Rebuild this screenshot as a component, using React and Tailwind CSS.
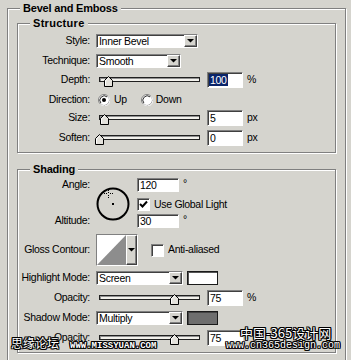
import React from "react";

const sunken =
  "border border-t-[#808080] border-l-[#808080] border-b-white border-r-white shadow-[inset_1px_1px_0_#404040]";
const raised =
  "border border-t-white border-l-white border-b-[#404040] border-r-[#404040] shadow-[inset_-1px_-1px_0_#808080]";
const outline =
  "[text-shadow:1px_0_0_#000,-1px_0_0_#000,0_1px_0_#000,0_-1px_0_#000,1px_1px_0_#000,-1px_-1px_0_#000,1px_-1px_0_#000,-1px_1px_0_#000]";

function Group({ title, className, children }) {
  return (
    <div
      className={
        "relative border border-[#808080] shadow-[inset_1px_1px_0_#fff,1px_1px_0_#fff] " +
        className
      }
    >
      <div className="absolute left-[12px] -top-[7px] px-[3px] bg-[#d5d4ce] font-bold text-[11px] leading-[12px] tracking-[-0.2px]">
        {title}
      </div>
      {children}
    </div>
  );
}

function Arrow() {
  return (
    <svg width="7" height="4" viewBox="0 0 7 4">
      <polygon points="0,0 7,0 3.5,3.6" fill="#000" />
    </svg>
  );
}

function Select({ w, text }) {
  return (
    <div className={`${w} h-[14px] ${sunken} bg-white flex items-stretch shrink-0`}>
      <div className="flex-1 pl-[2px] leading-[12px] whitespace-nowrap overflow-hidden">{text}</div>
      <div className={`w-[13px] ${raised} bg-[#d5d4ce] flex items-center justify-center`}>
        <Arrow />
      </div>
    </div>
  );
}

function Input({ w, h, children }) {
  return (
    <div className={`${w} ${h} ${sunken} bg-white flex items-center pl-[1px] shrink-0 leading-[12px]`}>
      {children}
    </div>
  );
}

function Slider({ thumb }) {
  return (
    <div className="relative w-[111px] h-[16px] shrink-0">
      <div className="ml-[3px] mt-[5px] w-[101px] h-[5px] border border-[#202020] bg-[#f2f1ec] shadow-[inset_1px_1px_0_#909090]" />
      <svg className={`absolute top-[4px] ${thumb}`} width="9" height="11" viewBox="0 0 9 11">
        <polygon points="0.5,10.5 0.5,4.5 4.5,0.5 8.5,4.5 8.5,10.5" fill="#e4e2dc" stroke="#000" />
        <polyline points="1.5,9.5 1.5,4.9 4.5,1.9" fill="none" stroke="#fff" />
      </svg>
    </div>
  );
}

function Label({ children }) {
  return <div className="w-[72px] shrink-0 text-right whitespace-nowrap">{children}</div>;
}

function Radio({ checked }) {
  return (
    <svg width="12" height="12" viewBox="0 0 12 12" className="shrink-0">
      <circle cx="6" cy="6" r="5.5" fill="#fff" stroke="#808080" />
      <path d="M10.3 2.4 A5.5 5.5 0 0 1 2.4 10.3" fill="none" stroke="#fff" />
      <path d="M2.9 9.1 A4.4 4.4 0 0 1 9.1 2.9" fill="none" stroke="#303030" />
      {checked && <circle cx="6" cy="6" r="2" fill="#000" />}
    </svg>
  );
}

function Check({ checked }) {
  return (
    <div className={`w-[13px] h-[13px] ${sunken} bg-white shrink-0 flex items-center justify-center`}>
      {checked && (
        <svg width="9" height="9" viewBox="0 0 9 9">
          <path d="M1 4 L3.5 6.5 L8 1.5" fill="none" stroke="#000" strokeWidth="2" />
        </svg>
      )}
    </div>
  );
}

function SliderRow({ className, label, thumb, value, unit, selected }) {
  return (
    <div className={`flex items-center h-[16px] ${className}`}>
      <Label>{label}</Label>
      <div className="ml-[6px] flex items-center">
        <Slider thumb={thumb} />
        <Input w="w-[36px]" h="h-[16px]">
          {selected ? (
            <span className="bg-[#0a246a] text-white px-[1px]">{value}</span>
          ) : (
            <span className="px-[1px]">{value}</span>
          )}
        </Input>
        {unit && <span className="ml-[4px]">{unit}</span>}
      </div>
    </div>
  );
}

export default function App() {
  return (
    <div className="relative w-[351px] h-[360px] overflow-hidden bg-[#d5d4ce] text-black font-['Liberation_Sans',Arial,sans-serif] text-[10.5px] tracking-[-0.3px]">
      <div className="pt-[8px] pl-[7px]">
        <Group title="Bevel and Emboss" className="w-[339px] h-[420px]">
          <div className="pt-[14px] pl-[9px]">
            <Group title={<span className="tracking-[0.3px]">Structure</span>} className="w-[319px] pt-[10px] pb-[6px]">
              <div className="flex items-center h-[14px]">
                <Label>Style:</Label>
                <div className="ml-[6px]">
                  <Select w="w-[102px]" text="Inner Bevel" />
                </div>
              </div>
              <div className="flex items-center h-[14px] mt-[6px]">
                <Label>Technique:</Label>
                <div className="ml-[6px]">
                  <Select w="w-[85px]" text="Smooth" />
                </div>
              </div>
              <SliderRow className="mt-[4px]" label="Depth:" thumb="left-[8px]" value="100" unit="%" selected />
              <div className="flex items-center h-[14px] mt-[5px]">
                <Label>Direction:</Label>
                <div className="ml-[8px] flex items-center">
                  <Radio checked />
                  <span className="ml-[4px]">Up</span>
                  <div className="ml-[14px]">
                    <Radio />
                  </div>
                  <span className="ml-[3px]">Down</span>
                </div>
              </div>
              <SliderRow className="mt-[3px]" label="Size:" thumb="left-[4px]" value="5" unit="px" />
              <SliderRow className="mt-[4px]" label="Soften:" thumb="-left-[1px]" value="0" unit="px" />
            </Group>

            <Group title="Shading" className="w-[319px] mt-[16px] pt-[8px] pb-[6px]">
              <div className="flex">
                <div className="w-[72px] shrink-0 flex flex-col items-end">
                  <div className="h-[14px] flex items-center">Angle:</div>
                  <div className="h-[14px] mt-[22px] flex items-center">Altitude:</div>
                </div>
                <div className="ml-[6px] w-[41px] shrink-0">
                  <svg className="mt-[9px]" width="34" height="34" viewBox="0 0 34 34">
                    <circle cx="17" cy="17" r="15.5" fill="none" stroke="#000" strokeWidth="2" />
                    <rect x="16" y="16" width="2" height="2" fill="#000" />
                    <g fill="#000">
                      <rect x="12" y="3" width="1" height="1" />
                      <rect x="12" y="5" width="1" height="1" />
                      <rect x="12" y="8" width="1" height="1" />
                      <rect x="12" y="10" width="1" height="1" />
                      <rect x="8" y="6" width="1" height="1" />
                      <rect x="10" y="6" width="1" height="1" />
                      <rect x="14" y="6" width="1" height="1" />
                      <rect x="16" y="6" width="1" height="1" />
                    </g>
                  </svg>
                </div>
                <div className="flex flex-col">
                  <div className="flex items-start h-[14px]">
                    <Input w="w-[42px]" h="h-[14px]">
                      <span className="px-[1px]">120</span>
                    </Input>
                    <span className="ml-[4px] leading-[10px]">°</span>
                  </div>
                  <div className="flex items-center h-[13px] mt-[6px]">
                    <Check checked />
                    <span className="ml-[4px] whitespace-nowrap">Use Global Light</span>
                  </div>
                  <div className="flex items-start h-[14px] mt-[3px]">
                    <Input w="w-[42px]" h="h-[14px]">
                      <span className="px-[1px]">30</span>
                    </Input>
                    <span className="ml-[4px] leading-[10px]">°</span>
                  </div>
                </div>
              </div>

              <div className="flex items-center h-[32px] mt-[6px]">
                <Label>Gloss Contour:</Label>
                <div className={`ml-[6px] w-[42px] h-[32px] ${sunken} bg-white flex shrink-0`}>
                  <svg width="29" height="30" viewBox="0 0 29 30" className="shrink-0">
                    <rect width="29" height="30" fill="#fff" />
                    <polygon points="0,30 29,0 29,30" fill="#8d8d8d" />
                  </svg>
                  <div className={`flex-1 ${raised} bg-[#d5d4ce] flex items-center justify-center`}>
                    <Arrow />
                  </div>
                </div>
                <div className="ml-[13px]">
                  <Check />
                </div>
                <span className="ml-[4px]">Anti-aliased</span>
              </div>

              <div className="flex items-center h-[14px] mt-[5px]">
                <Label>Highlight Mode:</Label>
                <div className="ml-[6px] flex items-center">
                  <Select w="w-[87px]" text="Screen" />
                  <div className="ml-[4px] w-[31px] h-[14px] border border-[#1a1a1a] shadow-[inset_1px_1px_0_#555] bg-white" />
                </div>
              </div>
              <SliderRow className="mt-[5px]" label="Opacity:" thumb="left-[74px]" value="75" unit="%" />
              <div className="flex items-center h-[14px] mt-[5px]">
                <Label>Shadow Mode:</Label>
                <div className="ml-[6px] flex items-center">
                  <Select w="w-[87px]" text="Multiply" />
                  <div className="ml-[4px] w-[31px] h-[14px] border border-[#1a1a1a] shadow-[inset_1px_1px_0_#444] bg-[#6e6e6e]" />
                </div>
              </div>
              <SliderRow className="mt-[5px]" label="Opacity:" thumb="left-[74px]" value="75" />
            </Group>
          </div>
        </Group>
      </div>

      <div className={`absolute left-[11px] top-[336px] text-white text-[12px] leading-[14px] tracking-[0px] font-['Noto_Sans_CJK_SC',sans-serif] ${outline}`}>
        思缘论坛
      </div>
      <div className={`absolute left-[70px] top-[341px] text-white text-[9px] leading-[10px] tracking-[0px] font-bold uppercase font-['Liberation_Mono',monospace] ${outline}`}>
        www.missyuan.com
      </div>
      <div className={`absolute left-[240px] top-[325px] text-white text-[13px] leading-[15px] tracking-[0px] font-['Noto_Sans_CJK_SC',sans-serif] ${outline}`}>
        中国-365设计网
      </div>
      <div className={`absolute left-[226px] top-[340px] text-white text-[10px] leading-[11px] tracking-[0px] font-['Liberation_Mono',monospace] ${outline}`}>
        www.cn365design.com
      </div>
    </div>
  );
}
